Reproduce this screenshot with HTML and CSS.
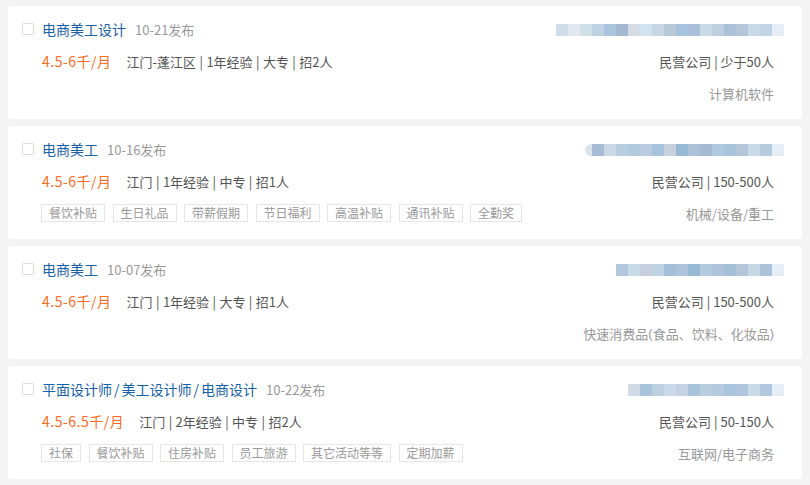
FILE: index.html
```html
<!DOCTYPE html>
<html lang="zh-CN">
<head>
<meta charset="utf-8">
<title>职位列表</title>
<link rel="stylesheet" href="styles.css">
</head>
<body>
<div class="list">
  <div class="card">
    <div class="left">
      <div class="row title-row"><span class="check"></span><a class="title">电商美工设计</a><span class="date">10-21发布</span></div>
      <div class="row info-row"><span class="salary">4.5-6千/月</span><span class="meta">江门-蓬江区 | 1年经验 | 大专 | 招2人</span></div>
      <div class="row"></div>
    </div>
    <div class="right">
      <div class="row blur-row">
        <div class="blur">
          <i style="background:#cfdde8"></i><i style="background:#e3e8f0"></i><i style="background:#d0dfe8"></i><i style="background:#bfd2e2"></i><i style="background:#a9c4dc"></i><i style="background:#a4b8d0"></i><i style="background:#d5dce6"></i><i style="background:#d3e2ef"></i><i style="background:#c9d6e3"></i><i style="background:#b8c9da"></i><i style="background:#a7c2dc"></i><i style="background:#a9c0d8"></i><i style="background:#cad9e6"></i><i style="background:#bfcfe0"></i><i style="background:#abc1d8"></i><i style="background:#b5c6da"></i><i style="background:#cad9e7"></i><i style="background:#c1d4e3"></i><i style="background:#e8eef7"></i>
        </div>
      </div>
      <div class="row company">民营公司 | 少于50人</div>
      <div class="row industry">计算机软件</div>
    </div>
  </div>

  <div class="card">
    <div class="left">
      <div class="row title-row"><span class="check"></span><a class="title">电商美工</a><span class="date">10-16发布</span></div>
      <div class="row info-row"><span class="salary">4.5-6千/月</span><span class="meta">江门 | 1年经验 | 中专 | 招1人</span></div>
      <div class="row tags"><span class="tag">餐饮补贴</span><span class="tag">生日礼品</span><span class="tag">带薪假期</span><span class="tag">节日福利</span><span class="tag">高温补贴</span><span class="tag">通讯补贴</span><span class="tag">全勤奖</span></div>
    </div>
    <div class="right">
      <div class="row blur-row">
        <div class="blur">
          <i class="first" style="background:#dde3ea"></i><i style="background:#a9bcd6"></i><i style="background:#cbd8e5"></i><i style="background:#b9cde0"></i><i style="background:#b3c9dd"></i><i style="background:#b9cce0"></i><i style="background:#a7c3db"></i><i style="background:#c8d0dd"></i><i style="background:#96bad4"></i><i style="background:#adc0d6"></i><i style="background:#a7bad4"></i><i style="background:#b1c9de"></i><i style="background:#a9c3db"></i><i style="background:#b5c6da"></i><i style="background:#cbdae8"></i><i style="background:#b8cce0"></i><i style="background:#e6eef8"></i>
        </div>
      </div>
      <div class="row company">民营公司 | 150-500人</div>
      <div class="row industry">机械/设备/重工</div>
    </div>
  </div>

  <div class="card">
    <div class="left">
      <div class="row title-row"><span class="check"></span><a class="title">电商美工</a><span class="date">10-07发布</span></div>
      <div class="row info-row"><span class="salary">4.5-6千/月</span><span class="meta">江门 | 1年经验 | 大专 | 招1人</span></div>
      <div class="row"></div>
    </div>
    <div class="right">
      <div class="row blur-row">
        <div class="blur">
          <i style="background:#b3c8dc"></i><i style="background:#c8dbe6"></i><i style="background:#c7cedd"></i><i style="background:#bfd3e3"></i><i style="background:#a4bfd9"></i><i style="background:#aec3d9"></i><i style="background:#98bad4"></i><i style="background:#b3cbdf"></i><i style="background:#adc4db"></i><i style="background:#a3c0d7"></i><i style="background:#b3c6da"></i><i style="background:#c8d9e6"></i><i style="background:#abc2d9"></i><i style="background:#e6eef8"></i>
        </div>
      </div>
      <div class="row company">民营公司 | 150-500人</div>
      <div class="row industry">快速消费品<span class="lat">(</span>食品、饮料、化妆品<span class="lat">)</span></div>
    </div>
  </div>

  <div class="card">
    <div class="left">
      <div class="row title-row"><span class="check"></span><a class="title">平面设计师<span class="sl">/</span>美工设计师<span class="sl">/</span>电商设计</a><span class="date">10-22发布</span></div>
      <div class="row info-row"><span class="salary">4.5-6.5千/月</span><span class="meta">江门 | 2年经验 | 中专 | 招2人</span></div>
      <div class="row tags"><span class="tag">社保</span><span class="tag">餐饮补贴</span><span class="tag">住房补贴</span><span class="tag">员工旅游</span><span class="tag">其它活动等等</span><span class="tag">定期加薪</span></div>
    </div>
    <div class="right">
      <div class="row blur-row">
        <div class="blur">
          <i style="background:#d2dae5"></i><i style="background:#a9c3da"></i><i style="background:#bdd0e0"></i><i style="background:#cbdaea"></i><i style="background:#c4d2e2"></i><i style="background:#a9c4da"></i><i style="background:#b9cfe0"></i><i style="background:#b5cade"></i><i style="background:#a8c5db"></i><i style="background:#b0c6dc"></i><i style="background:#cbdae8"></i><i style="background:#b1c8de"></i><i style="background:#e6eef8"></i>
        </div>
      </div>
      <div class="row company">民营公司 | 50-150人</div>
      <div class="row industry">互联网/电子商务</div>
    </div>
  </div>
</div>
</body>
</html>
```
FILE: styles.css
```css
* { box-sizing: border-box; }
html, body { margin: 0; padding: 0; }
body {
  background: #f4f4f4;
  font-family: "Noto Sans CJK SC", "Noto Sans", sans-serif;
  color: #555;
}
.list {
  padding: 6px 8px 0 8px;
  display: flex;
  flex-direction: column;
  gap: 7px;
}
.card {
  width: 794px;
  height: 113px;
  background: #fff;
  border-radius: 3px;
  padding: 7px 28px 10px 14px;
  display: flex;
  justify-content: space-between;
}
.left, .right {
  display: flex;
  flex-direction: column;
}
.right { align-items: flex-end; }
.row {
  height: 32px;
  display: flex;
  align-items: center;
  white-space: nowrap;
}
.check {
  width: 12px;
  height: 12px;
  border: 1px solid #dcdcdc;
  border-radius: 2px;
  margin-right: 8px;
}
.title {
  font-size: 14px;
  color: #1560a8;
  margin-right: 9px;
}
.title .sl { margin: 0 2px; }
.date {
  font-size: 13px;
  color: #999;
}
.info-row { padding-left: 20px; }
.salary {
  font-size: 14px;
  color: #ff6a22;
  letter-spacing: 0.5px;
  margin-right: 15px;
}
.meta { font-size: 13px; color: #555; word-spacing: 0.5px; }
.tags { padding-left: 19px; gap: 7.5px; }
.tag {
  height: 18px;
  line-height: 16px;
  border: 1px solid #e6e6e6;
  padding: 0 7px;
  font-size: 12px;
  color: #999;
}
.blur-row { margin-right: -10px; align-items: flex-start; padding-top: 11px; }
.blur { display: flex; }
.blur i {
  display: block;
  width: 12px;
  height: 12px;
}
.blur i.first { width: 7px; border-radius: 6px 0 0 6px; }
.company { font-size: 13px; color: #555; }
.industry { font-size: 13px; color: #999; }
.lat { font-family: "Liberation Sans", sans-serif; }
```
